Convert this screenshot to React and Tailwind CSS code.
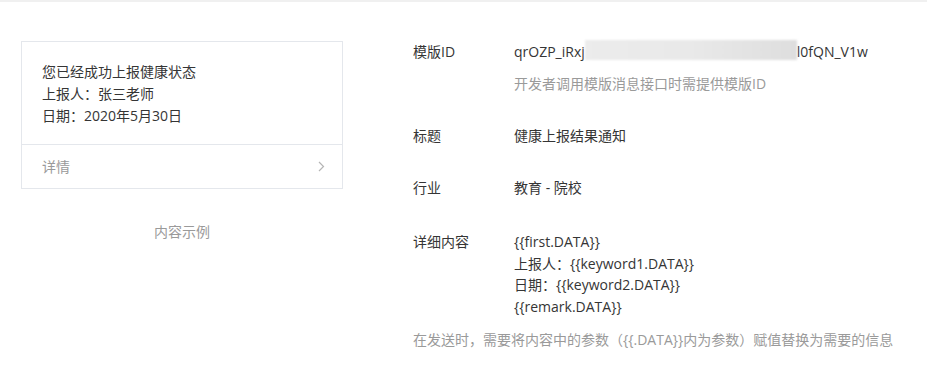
const fields = [
  { label: '标题', value: '健康上报结果通知' },
  { label: '行业', value: '教育 - 院校' },
];

const contentLines = [
  '{{first.DATA}}',
  '上报人：{{keyword1.DATA}}',
  '日期：{{keyword2.DATA}}',
  '{{remark.DATA}}',
];

function App() {
  return (
    <div
      className="w-[927px] h-[371px] bg-white border-t-2 border-[#f0f0f0] text-[14px] text-[#353535] flex overflow-hidden"
      style={{ fontFamily: '"Open Sans", "Noto Sans CJK SC", sans-serif' }}
    >
      {/* preview card */}
      <div className="w-[322px] ml-[21px] mt-[39px] flex flex-col">
        <div className="border border-[#e4e7ec]">
          <div className="px-[20px] pt-[19px] pb-[17px] leading-[22px]">
            <p>您已经成功上报健康状态</p>
            <p>上报人：张三老师</p>
            <p>日期：2020年5月30日</p>
          </div>
          <div className="border-t border-[#e4e7ec] h-[44px] pl-[20px] pr-[17px] flex items-center justify-between text-[#9a9a9a]">
            <span>详情</span>
            <svg width="7" height="11" viewBox="0 0 7 11" fill="none">
              <path d="M1 1l4.5 4.5L1 10" stroke="#b5b5b5" strokeWidth="1.2" />
            </svg>
          </div>
        </div>
        <p className="mt-[32px] text-center text-[#9a9a9a] leading-[22px]">内容示例</p>
      </div>

      {/* template info */}
      <div className="ml-[70px] mt-[39px] flex flex-col">
        <div className="flex leading-[22px]">
          <span className="w-[101px]">模版ID</span>
          <div className="flex flex-col">
            <div className="flex items-center whitespace-nowrap">
              <span>qrOZP_iRxj</span>
              <span className="inline-block w-[212px] h-[20px] -mt-[4px] bg-gradient-to-r from-[#ececec] via-[#e9e9e9] to-[#dedede] blur-[1px]"></span>
              <span>l0fQN_V1w</span>
            </div>
            <span className="mt-[10px] text-[#9a9a9a]">开发者调用模版消息接口时需提供模版ID</span>
          </div>
        </div>

        {fields.map((f) => (
          <div key={f.label} className="flex leading-[22px] mt-[30px]">
            <span className="w-[101px]">{f.label}</span>
            <span>{f.value}</span>
          </div>
        ))}

        <div className="flex mt-[32px] leading-[21.5px]">
          <span className="w-[101px]">详细内容</span>
          <div className="flex flex-col">
            {contentLines.map((line) => (
              <span key={line}>{line}</span>
            ))}
          </div>
        </div>
        <p className="mt-[12px] leading-[22px] text-[#9a9a9a] whitespace-nowrap">
          在发送时，需要将内容中的参数（{'{{.DATA}}'}内为参数）赋值替换为需要的信息
        </p>
      </div>
    </div>
  );
}

export default App;
